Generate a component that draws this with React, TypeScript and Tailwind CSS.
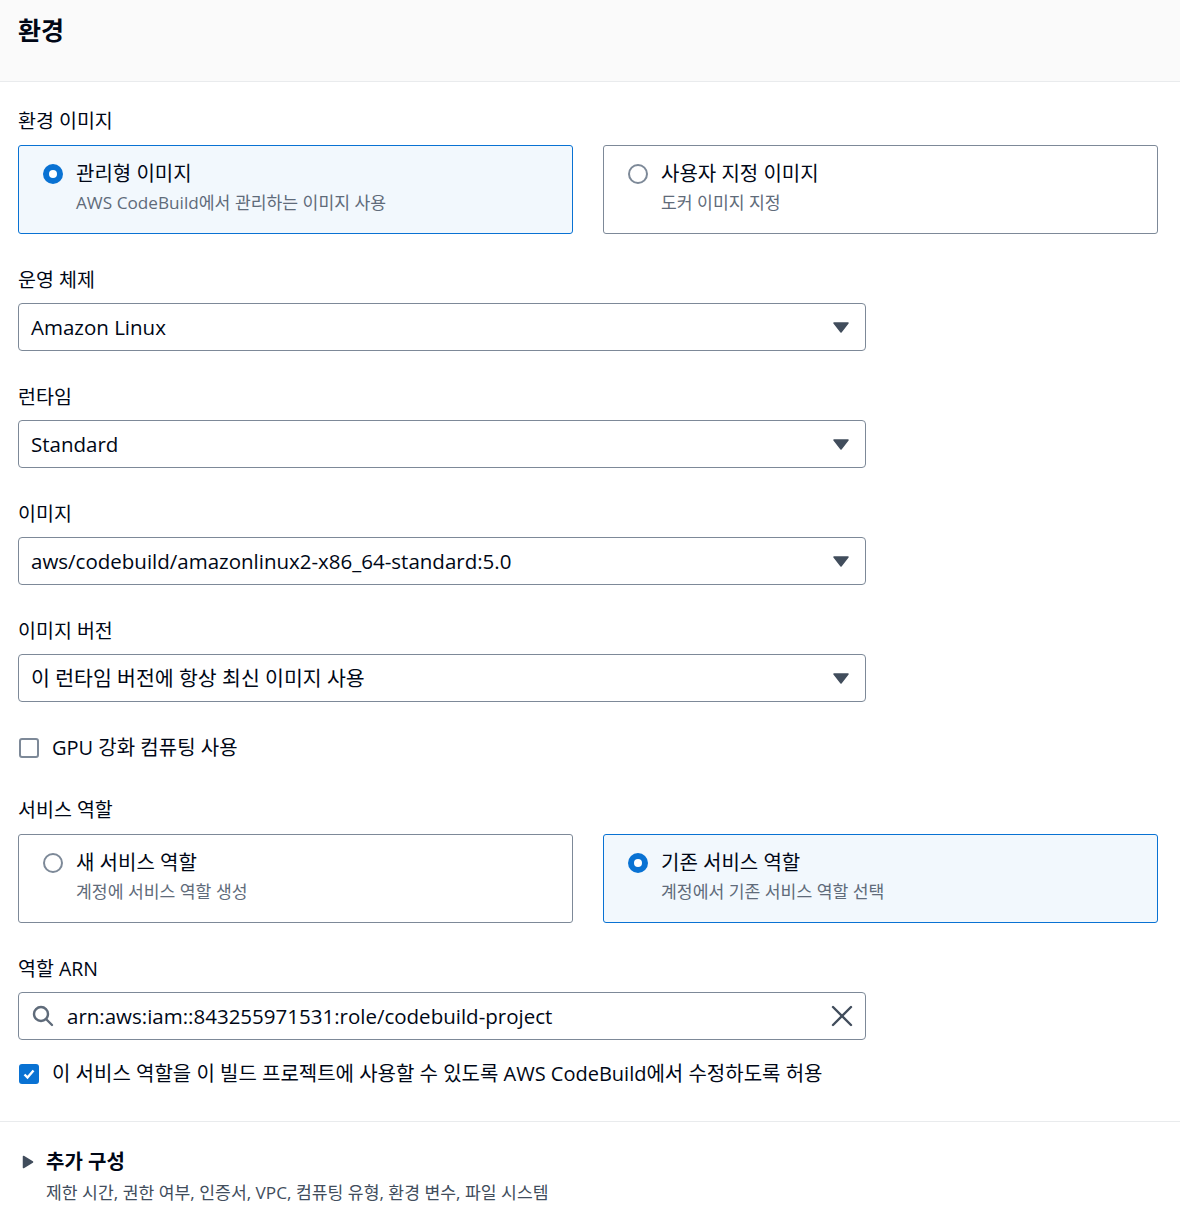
import React from 'react';

// ============================================================================
// Types
// ============================================================================

interface TileOption {
  title: string;
  description: string;
}

// ============================================================================
// Constants
// ============================================================================

const FONT = 'font-["Open_Sans","Noto_Sans_CJK_KR",sans-serif]';

const IMAGE_OPTIONS: TileOption[] = [
  { title: '관리형 이미지', description: 'AWS CodeBuild에서 관리하는 이미지 사용' },
  { title: '사용자 지정 이미지', description: '도커 이미지 지정' },
];

const ROLE_OPTIONS: TileOption[] = [
  { title: '새 서비스 역할', description: '계정에 서비스 역할 생성' },
  { title: '기존 서비스 역할', description: '계정에서 기존 서비스 역할 선택' },
];

// ============================================================================
// Sub-Components
// ============================================================================

function FieldLabel({ children, top }: { children: React.ReactNode; top: string }): React.ReactElement {
  return <div className={`${top} h-[26px] text-[19.5px] leading-[26px] text-[#000716]`}>{children}</div>;
}

function Radio({ checked }: { checked: boolean }): React.ReactElement {
  return checked ? (
    <span className="flex h-[20px] w-[20px] items-center justify-center rounded-full bg-[#0972d3]">
      <span className="h-[8px] w-[8px] rounded-full bg-white" />
    </span>
  ) : (
    <span className="h-[20px] w-[20px] rounded-full border-2 border-[#7d8998] bg-white" />
  );
}

function Tile({ option, selected }: { option: TileOption; selected: boolean }): React.ReactElement {
  return (
    <div
      className={`h-[89px] rounded-[3px] border pl-[24px] pt-[15px] ${
        selected ? 'border-[#0972d3] bg-[#f2f8fd]' : 'border-[#7d8998] bg-white'
      }`}
    >
      <div className="flex h-[26px] items-center gap-[13px]">
        <Radio checked={selected} />
        <span className="text-[20px] leading-[26px] text-[#000716]">{option.title}</span>
      </div>
      <div className="mt-[5px] pl-[33px] text-[17.2px] leading-[22px] text-[#5f6b7a]">{option.description}</div>
    </div>
  );
}

function TilePair({ options, selectedIndex }: { options: TileOption[]; selectedIndex: number }): React.ReactElement {
  return (
    <div className="mt-[11px] grid w-[1140px] grid-cols-2 gap-[30px]">
      {options.map((option, i) => (
        <Tile key={option.title} option={option} selected={i === selectedIndex} />
      ))}
    </div>
  );
}

function Select({ value }: { value: string }): React.ReactElement {
  return (
    <div className="mt-[10px] flex h-[48px] w-[848px] items-center justify-between rounded-[4px] border border-[#7d8998] bg-white pl-[12px] pr-[16px]">
      <span className="text-[20.5px] text-[#000716]">{value}</span>
      <svg width="16" height="11" viewBox="0 0 16 11">
        <path d="M1 1h14L8 10z" fill="#414d5c" stroke="#414d5c" strokeWidth="1.5" strokeLinejoin="round" />
      </svg>
    </div>
  );
}

function CheckBox({ checked }: { checked: boolean }): React.ReactElement {
  return checked ? (
    <span className="flex h-[20px] w-[20px] items-center justify-center rounded-[3px] bg-[#0972d3]">
      <svg width="14" height="14" viewBox="0 0 14 14" fill="none" stroke="white" strokeWidth="2.4">
        <polyline points="2.5 7.5 5.5 10.5 11.5 3.5" />
      </svg>
    </span>
  ) : (
    <span className="h-[20px] w-[20px] rounded-[3px] border-2 border-[#7d8998] bg-white" />
  );
}

// ============================================================================
// Main Component
// ============================================================================

export default function App(): React.ReactElement {
  return (
    <div className={`${FONT} w-[1180px] bg-white`}>
      {/* Header */}
      <div className="h-[82px] border-b border-[#e9ebed] bg-[#fafafa] pl-[18px] pt-[14px]">
        <h2 className="text-[25px] font-bold leading-[32px] text-[#000716]">환경</h2>
      </div>

      <div className="pl-[18px] pr-[18px]">
        {/* Environment image */}
        <FieldLabel top="mt-[26px]">환경 이미지</FieldLabel>
        <TilePair options={IMAGE_OPTIONS} selectedIndex={0} />

        <FieldLabel top="mt-[33px]">운영 체제</FieldLabel>
        <Select value="Amazon Linux" />

        <FieldLabel top="mt-[33px]">런타임</FieldLabel>
        <Select value="Standard" />

        <FieldLabel top="mt-[33px]">이미지</FieldLabel>
        <Select value="aws/codebuild/amazonlinux2-x86_64-standard:5.0" />

        <FieldLabel top="mt-[33px]">이미지 버전</FieldLabel>
        <Select value="이 런타임 버전에 항상 최신 이미지 사용" />

        {/* GPU */}
        <div className="mt-[33px] flex h-[26px] items-center gap-[13px] pl-[1px]">
          <CheckBox checked={false} />
          <span className="text-[20px] text-[#000716]">GPU 강화 컴퓨팅 사용</span>
        </div>

        {/* Service role */}
        <FieldLabel top="mt-[36px]">서비스 역할</FieldLabel>
        <TilePair options={ROLE_OPTIONS} selectedIndex={1} />

        <FieldLabel top="mt-[33px]">역할 ARN</FieldLabel>
        <div className="mt-[10px] flex h-[48px] w-[848px] items-center rounded-[4px] border border-[#7d8998] bg-white pl-[13px] pr-[12px]">
          <svg width="22" height="22" viewBox="0 0 22 22" fill="none" stroke="#5f6b7a" strokeWidth="2.4" strokeLinecap="round">
            <circle cx="9" cy="9" r="7" />
            <path d="M14 14l6 6" />
          </svg>
          <span className="ml-[13px] flex-1 text-[20.5px] text-[#000716]">arn:aws:iam::843255971531:role/codebuild-project</span>
          <svg width="22" height="22" viewBox="0 0 22 22" fill="none" stroke="#414d5c" strokeWidth="2.4" strokeLinecap="round">
            <path d="M2 2l18 18M20 2L2 20" />
          </svg>
        </div>

        <div className="mt-[21px] flex h-[26px] items-center gap-[13px] pl-[1px]">
          <CheckBox checked />
          <span className="text-[20px] text-[#000716]">
            이 서비스 역할을 이 빌드 프로젝트에 사용할 수 있도록 AWS CodeBuild에서 수정하도록 허용
          </span>
        </div>
      </div>

      {/* Additional configuration */}
      <div className="mt-[34px] border-t border-[#e9ebed] pl-[22px] pt-[27px] pb-[20px]">
        <div className="flex h-[26px] items-center gap-[12px]">
          <svg width="12" height="14" viewBox="0 0 12 14">
            <path d="M1.5 1.5l9 5.5-9 5.5z" fill="#414d5c" stroke="#414d5c" strokeWidth="1.5" strokeLinejoin="round" />
          </svg>
          <span className="text-[20px] font-bold text-[#000716]">추가 구성</span>
        </div>
        <div className="mt-[7px] pl-[24px] text-[17.2px] leading-[22px] text-[#414d5c]">
          제한 시간, 권한 여부, 인증서, VPC, 컴퓨팅 유형, 환경 변수, 파일 시스템
        </div>
      </div>
    </div>
  );
}
